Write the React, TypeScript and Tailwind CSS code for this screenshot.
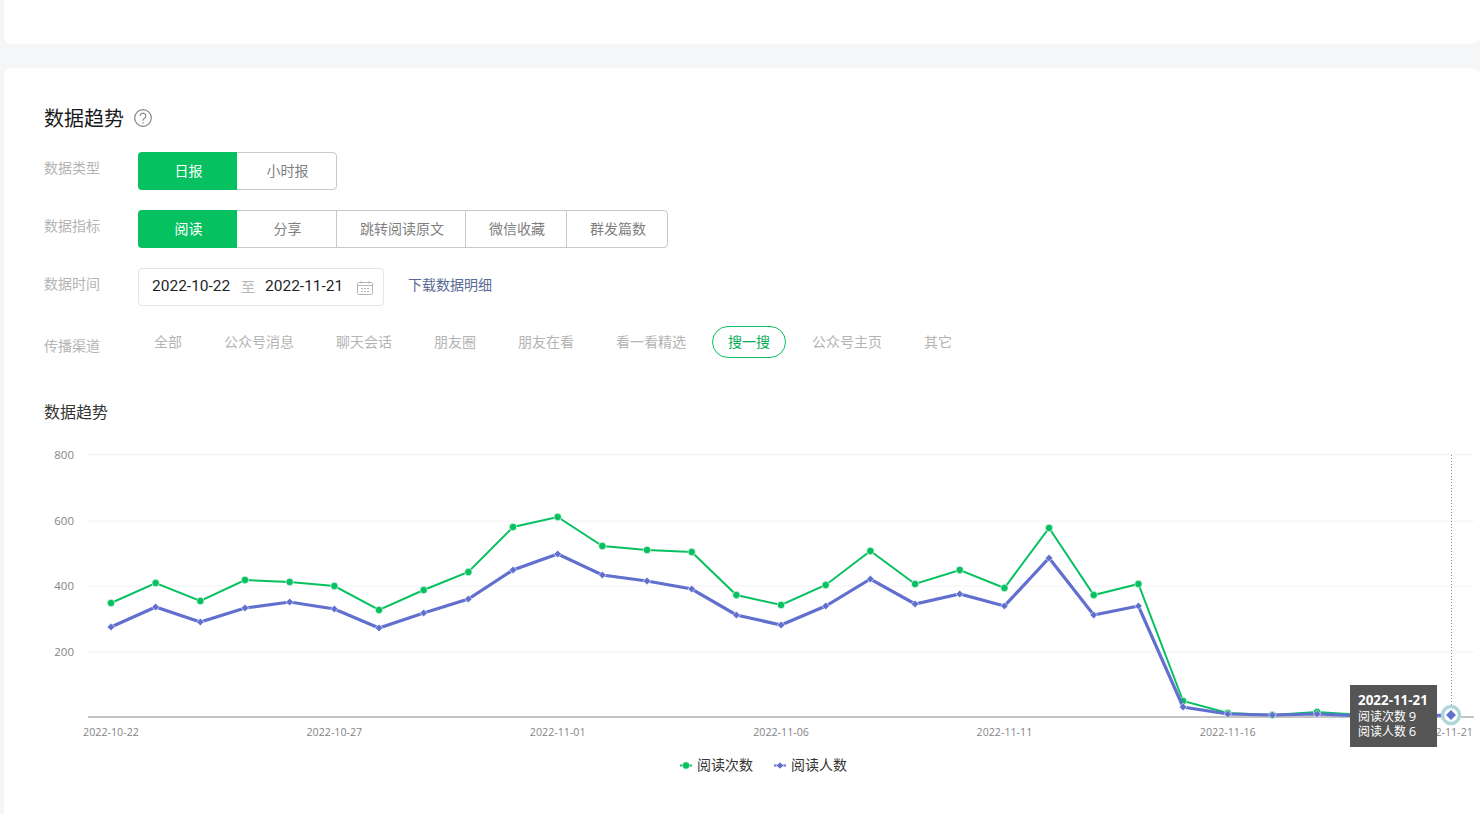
const CJK = '"Noto Sans CJK SC", sans-serif'
const LATIN = '"Open Sans", "Noto Sans CJK SC", sans-serif'

const readCounts = [603, 583, 601, 580, 582, 586, 610, 590, 572, 527, 517, 546, 550, 552, 595, 605, 585, 551, 584, 570, 588, 528, 595, 584, 701, 713, 715, 712, 715, 715, 715]
const readUsers = [627, 607, 622, 608, 602, 609, 628, 613, 599, 570, 554, 575, 581, 589, 615, 625, 606, 579, 604, 594, 606, 558, 615, 606, 707, 714, 715, 714, 716, 716, 715]

const xAt = (i: number) => 111 + i * 44.67
const toPoints = (ys: number[]) => ys.map((y, i) => `${xAt(i)},${y}`).join(' ')

const grid = [
  { label: '800', y: 454.5 },
  { label: '600', y: 521 },
  { label: '400', y: 586 },
  { label: '200', y: 652 },
]
const dates = [
  { label: '2022-10-22', x: xAt(0) },
  { label: '2022-10-27', x: xAt(5) },
  { label: '2022-11-01', x: xAt(10) },
  { label: '2022-11-06', x: xAt(15) },
  { label: '2022-11-11', x: xAt(20) },
  { label: '2022-11-16', x: xAt(25) },
  { label: '2022-11-21', x: 1445 },
]
const channels = ['全部', '公众号消息', '聊天会话', '朋友圈', '朋友在看', '看一看精选', '搜一搜', '公众号主页', '其它']

function Segments({ items, widths }: { items: string[]; widths: string[] }) {
  return (
    <div className="flex h-[38px] rounded border border-[#c9c9c9]">
      {items.map((item, i) => (
        <div
          key={item}
          className={
            i === 0
              ? `-my-px -ml-px flex items-center justify-center rounded-l bg-[#07c160] pb-[2px] pl-[2px] text-sm text-white ${widths[i]}`
              : `flex items-center justify-center border-[#c9c9c9] pb-[2px] pl-[2px] text-sm text-[#7f7f7f] ${i > 1 ? 'border-l' : ''} ${widths[i]}`
          }
        >
          {item}
        </div>
      ))}
    </div>
  )
}

function Row({ label, children, className }: { label: string; children: React.ReactNode; className?: string }) {
  return (
    <div className={`flex ${className ?? ''}`}>
      <div className="w-[94px] shrink-0 text-sm leading-[30px] text-[#b4b4b4]">{label}</div>
      {children}
    </div>
  )
}

function Chart() {
  return (
    <div className="relative h-[350px]">
      <svg width="1436" height="350" viewBox="44 440 1436 350" className="block">
        {grid.map((g) => (
          <g key={g.label}>
            <line x1="88" x2="1474" y1={g.y} y2={g.y} stroke="#f2f2f2" />
            <text x="74" y={g.y + 4} textAnchor="end" fontSize="11.5" fill="#858585" fontFamily={LATIN}>
              {g.label}
            </text>
          </g>
        ))}
        <line x1="88" x2="1474" y1="717" y2="717" stroke="#c4c4c4" strokeWidth="2" />
        <line x1="1451.5" x2="1451.5" y1="455" y2="708" stroke="#7f8f7f" strokeDasharray="1 2" />
        {dates.map((d) => (
          <text key={d.label} x={d.x} y="736" textAnchor="middle" fontSize="10.7" fill="#858585" fontFamily={LATIN}>
            {d.label}
          </text>
        ))}
        <polyline points={toPoints(readCounts)} fill="none" stroke="#07c160" strokeWidth="2" />
        {readCounts.map((y, i) => (
          <circle key={i} cx={xAt(i)} cy={y} r="3.7" fill="#07c160" stroke="#ffffff" strokeWidth="0.6" />
        ))}
        <polyline points={toPoints(readUsers)} fill="none" stroke="#6170cf" strokeWidth="3.2" />
        {readUsers.map((y, i) => (
          <path key={i} d={`M${xAt(i)} ${y - 3.8}l3.8 3.8l-3.8 3.8l-3.8-3.8z`} fill="#6170cf" stroke="#ffffff" strokeWidth="0.6" />
        ))}
        <circle cx="1451" cy="715" r="8.5" fill="#ffffff" stroke="#b0d5d8" strokeWidth="3.5" />
        <path d="M1451 710l5 5l-5 5l-5-5z" fill="#6170cf" />
        <g>
          <line x1="680" x2="692" y1="765.5" y2="765.5" stroke="#07c160" strokeWidth="2" />
          <circle cx="686" cy="765.5" r="3.7" fill="#07c160" stroke="#ffffff" strokeWidth="0.6" />
          <text x="697" y="770" fontSize="14" fill="#353535" fontFamily={CJK}>阅读次数</text>
          <line x1="774" x2="786" y1="765.5" y2="765.5" stroke="#6170cf" strokeWidth="2" />
          <path d="M780 762l3.7 3.5l-3.7 3.5l-3.7-3.5z" fill="#6170cf" stroke="#ffffff" strokeWidth="0.6" />
          <text x="791" y="770" fontSize="14" fill="#353535" fontFamily={CJK}>阅读人数</text>
        </g>
      </svg>
      <div className="absolute left-[1306px] top-[245px] flex h-[62px] w-[87px] flex-col bg-[#555555] pl-2 pt-2 text-xs whitespace-nowrap text-white">
        <div className="h-[15px] text-[13.4px] leading-[15px] font-bold" style={{ fontFamily: LATIN }}>2022-11-21</div>
        <div className="h-[15px] leading-[15px]">阅读次数 <span className="text-[13px] leading-none" style={{ fontFamily: LATIN }}>9</span></div>
        <div className="h-[15px] leading-[15px]">阅读人数 <span className="text-[13px] leading-none" style={{ fontFamily: LATIN }}>6</span></div>
      </div>
    </div>
  )
}

export default function App() {
  return (
    <div className="h-[814px] w-[1480px] overflow-hidden bg-[#f5f6f7] pl-1 font-['Noto_Sans_CJK_SC',sans-serif]">
      <div className="h-[44px] rounded-b-lg bg-white" />
      <div className="mt-6 h-[760px] rounded-t-lg bg-white pl-10 pt-[35px]">
        <div className="flex h-[30px] items-center">
          <h1 className="text-xl leading-[30px] font-normal text-[#1a1a1a]">数据趋势</h1>
          <svg width="18" height="18" viewBox="0 0 18 18" className="ml-[10px]" fill="none">
            <circle cx="9" cy="9" r="8.3" stroke="#858585" strokeWidth="1.2" />
            <path d="M6.2 7a2.8 2.8 0 1 1 4.3 2.3c-1 .6-1.5 1.1-1.5 2v.5" stroke="#858585" strokeWidth="1.2" />
            <circle cx="9" cy="13.8" r=".8" fill="#858585" />
          </svg>
        </div>

        <Row label="数据类型" className="mt-[19px]">
          <Segments items={['日报', '小时报']} widths={['w-[99px]', 'w-[99px]']} />
        </Row>
        <Row label="数据指标" className="mt-5">
          <Segments
            items={['阅读', '分享', '跳转阅读原文', '微信收藏', '群发篇数']}
            widths={['w-[99px]', 'w-[99px]', 'w-[129px]', 'w-[101px]', 'w-[101px]']}
          />
        </Row>
        <Row label="数据时间" className="mt-5">
          <div className="flex h-[38px] w-[246px] items-center rounded border border-[#e6e6e6] pl-[13px] text-[#1f1f1f]">
            <span className="w-[79px] text-[15.5px] whitespace-nowrap font-['Roboto',sans-serif]">2022-10-22</span>
            <span className="ml-[10px] pb-[2px] text-sm text-[#b4b4b4]">至</span>
            <span className="ml-[10px] w-[78px] text-[15.5px] whitespace-nowrap font-['Roboto',sans-serif]">2022-11-21</span>
            <svg width="16" height="14" viewBox="0 0 16 14" className="ml-[14px] mt-[1px]" fill="none" stroke="#b4b4b4">
              <rect x="0.5" y="1.5" width="15" height="12" rx="1" />
              <path d="M0.5 4.5h15M4 0v2.5M12 0v2.5" />
              <path d="M4 7.5h2M7 7.5h2M10 7.5h2M4 10.5h2M7 10.5h2M10 10.5h2" />
            </svg>
          </div>
          <a className="ml-6 text-sm leading-[32px] text-[#576b95]">下载数据明细</a>
        </Row>
        <div className="mt-5 flex">
          <div className="w-[94px] shrink-0 pt-[3px] text-sm leading-[32px] text-[#b4b4b4]">传播渠道</div>
          <div className="flex gap-[10px]">
            {channels.map((c) => (
              <div
                key={c}
                className={
                  c === '搜一搜'
                    ? 'flex h-8 items-center rounded-2xl border border-[#07c160] px-[15px] pb-[2px] text-sm text-[#06ad56]'
                    : 'flex h-8 items-center px-4 pb-[2px] text-sm text-[#b4b4b4]'
                }
              >
                {c}
              </div>
            ))}
          </div>
        </div>
        <h2 className="mt-[38px] text-base leading-6 font-normal text-[#353535]">数据趋势</h2>
        <div className="mt-[17px]">
          <Chart />
        </div>
      </div>
    </div>
  )
}
